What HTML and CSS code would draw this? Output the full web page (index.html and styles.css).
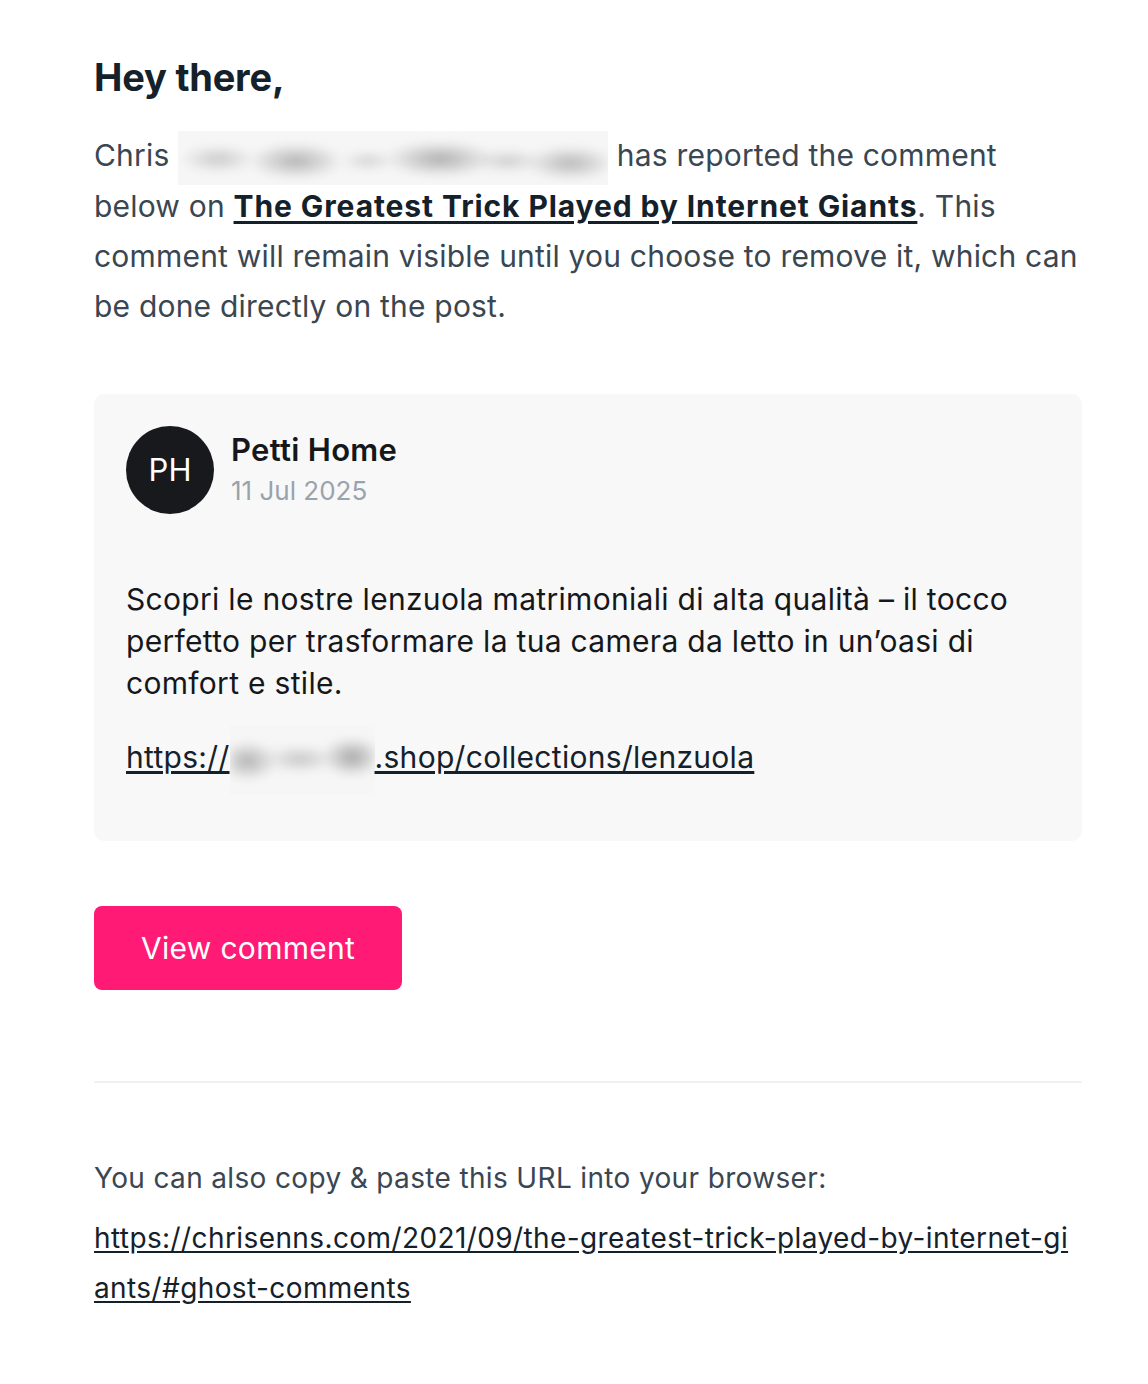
FILE: index.html
```html
<!DOCTYPE html>
<html lang="en">
<head>
  <meta charset="UTF-8" />
  <title>Comment reported</title>
  <meta name="viewport" content="width=device-width, initial-scale=1" />
  <link rel="stylesheet" href="styles.css">
</head>
<body>
  <main class="email">
    <h1 class="greeting">Hey there,</h1>
    <p class="intro">
      Chris <span class="redacted redacted-name"><span class="smudge"></span></span> has reported the comment
      below on <a href="#" class="post-link">The Greatest Trick Played by Internet Giants</a>. This
      comment will remain visible until you choose to remove it, which can be done directly on the post.
    </p>

    <!-- The reported comment -->
    <section class="comment-card">
      <div class="comment-head">
        <div class="avatar">PH</div>
        <div class="meta">
          <div class="author">Petti Home</div>
          <div class="date">11 Jul 2025</div>
        </div>
      </div>
      <p class="comment-body">Scopri le nostre lenzuola matrimoniali di alta qualità – il tocco perfetto per trasformare la tua camera da letto in un’oasi di comfort e stile.</p>
      <p class="comment-body"><a href="#" class="comment-link">https://<span class="redacted redacted-domain"><span class="smudge"></span></span>.shop/collections/lenzuola</a></p>
    </section>

    <a href="#" class="btn">View comment</a>

    <hr class="divider" />

    <p class="footer-note">You can also copy &amp; paste this URL into your browser:</p>
    <p class="footer-url"><a href="#">https://chrisenns.com/2021/09/the-greatest-trick-played-by-internet-giants/#ghost-comments</a></p>
  </main>
</body>
</html>
```

FILE: styles.css
```css
/* Reset and base */
* {
  box-sizing: border-box;
  margin: 0;
  padding: 0;
}
body {
  background: #fff;
  font-family: Inter, 'Noto Sans', sans-serif;
  color: #3a4651;
}

.email {
  width: 988px;
  margin-left: 94px;
  padding: 52px 0 60px;
}

.greeting {
  font-size: 38px;
  font-weight: 700;
  color: #15212a;
  line-height: 50px;
  margin-bottom: 28px;
  letter-spacing: -0.2px;
}

.intro {
  font-size: 30px;
  line-height: 50px;
  letter-spacing: 0.2px;
  color: #3a4651;
}
.post-link {
  color: #15212a;
  font-weight: 700;
  letter-spacing: 0.9px;
  text-decoration: underline;
  text-underline-offset: 4px;
}

/* Blurred-out bits (drawn as smudges, no text) */
.redacted {
  display: inline-block;
  vertical-align: middle;
  background: #f6f6f6;
  overflow: hidden;
}
.redacted-name {
  width: 430px;
  height: 54px;
  margin: -4px 0;
}
.redacted-domain {
  width: 145px;
  height: 70px;
  margin: -14px 0;
}
.smudge {
  display: block;
  width: 100%;
  height: 100%;
  filter: blur(4px);
}
.redacted-name .smudge {
  background:
    radial-gradient(ellipse 38px 14px at 40px 28px, #c9c9c9, transparent),
    radial-gradient(ellipse 48px 18px at 118px 30px, #b3b3b3, transparent),
    radial-gradient(ellipse 28px 10px at 190px 30px, #d2d2d2, transparent),
    radial-gradient(ellipse 56px 18px at 262px 28px, #aeaeae, transparent),
    radial-gradient(ellipse 34px 12px at 330px 30px, #cdcdcd, transparent),
    radial-gradient(ellipse 46px 17px at 392px 32px, #b8b8b8, transparent);
}
.redacted-domain .smudge {
  background:
    radial-gradient(ellipse 30px 20px at 18px 36px, #b2b2b2, transparent),
    radial-gradient(ellipse 36px 14px at 70px 34px, #c6c6c6, transparent),
    radial-gradient(ellipse 30px 20px at 122px 32px, #a6a6a6, transparent);
}

/* Comment card */
.comment-card {
  background: #f8f8f8;
  border-radius: 10px;
  padding: 32px 32px 60px;
  margin-top: 63px;
}
.comment-head {
  display: flex;
  align-items: center;
  gap: 17px;
  margin-bottom: 64px;
}
.avatar {
  width: 88px;
  height: 88px;
  border-radius: 50%;
  background: #17191c;
  color: #fff;
  font-size: 31px;
  display: flex;
  align-items: center;
  justify-content: center;
  flex-shrink: 0;
}
.author {
  font-size: 31px;
  font-weight: 600;
  letter-spacing: 0.3px;
  color: #15171a;
  line-height: 42px;
}
.date {
  font-size: 26px;
  color: #98a3ae;
  line-height: 40px;
}
.comment-body {
  font-size: 30px;
  line-height: 42px;
  letter-spacing: 0.3px;
  color: #15171a;
  margin-bottom: 32px;
}
.comment-body:last-child {
  margin-bottom: 0;
}
.comment-link {
  color: #15212a;
  text-decoration: underline;
  text-underline-offset: 3px;
}

/* Button */
.btn {
  display: inline-block;
  margin-top: 65px;
  background: #ff1a75;
  color: #fff;
  font-size: 30px;
  letter-spacing: 0.3px;
  line-height: 84px;
  padding: 0 47px;
  border-radius: 8px;
  text-decoration: none;
}

.divider {
  border: none;
  border-top: 2px solid #eef0f2;
  margin: 91px 0 70px;
}

.footer-note {
  font-size: 28px;
  line-height: 50px;
  letter-spacing: 0.35px;
  color: #3a4651;
  margin-bottom: 10px;
}
.footer-url {
  font-size: 28px;
  line-height: 50px;
  letter-spacing: 0.4px;
  word-break: break-all;
}
.footer-url a {
  color: #15212a;
  text-decoration: underline;
  text-underline-offset: 3px;
}
```
